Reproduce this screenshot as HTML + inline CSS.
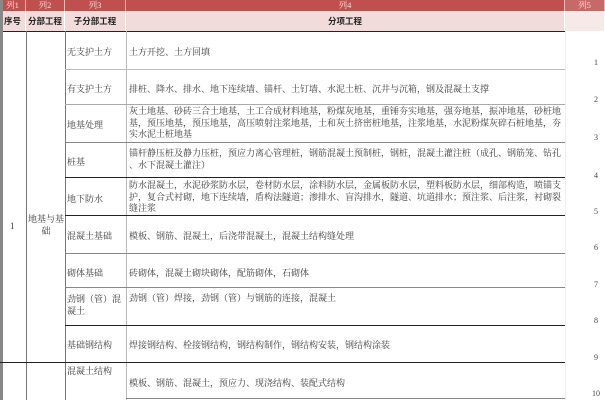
<!DOCTYPE html>
<html><head><meta charset="utf-8"><style>
*{margin:0;padding:0;box-sizing:border-box}
body{width:605px;height:400px;background:#fff;position:relative;overflow:hidden;font-family:"Liberation Serif","Noto Serif CJK SC",serif;font-size:9px;color:#3a3a3a}
.a{position:absolute}
.h1{background:#c0504d;color:#f4e0df;top:0;height:11px;font-size:8.5px;line-height:11px;text-align:center;border-right:1px solid #e8b8b6}
.h2{background:#f2dcdb;top:11px;height:20px;font-size:8.5px;line-height:20px;text-align:center;font-weight:bold;color:#222;font-family:"Liberation Sans","Noto Sans CJK SC",sans-serif;border-right:1px solid #fff}
.hl{height:1px;background:#888}
.hd{height:1px;background:#222}
.vl{width:1px;background:#777}
.t{line-height:11.5px;line-break:anywhere;word-break:break-all}
.n{left:594px;font-size:8px;color:#444}
</style></head><body>
<div class="a h1" style="left:0;width:26px">列1</div>
<div class="a h1" style="left:26px;width:39px">列2</div>
<div class="a h1" style="left:65px;width:61px">列3</div>
<div class="a h1" style="left:126px;width:439px">列4</div>
<div class="a h1" style="left:565px;width:40px;background:#c76a67">列5</div>
<div class="a h2" style="left:0;width:26px">序号</div>
<div class="a h2" style="left:26px;width:39px">分部工程</div>
<div class="a h2" style="left:65px;width:61px">子分部工程</div>
<div class="a h2" style="left:126px;width:439px">分项工程</div>
<div class="a h2" style="left:565px;width:40px;background:#f7e9e8"></div>
<div class="a hd" style="left:0;top:31px;width:565px"></div>
<div class="a" style="left:0;top:0;width:3px;height:400px;background:#888"></div>
<div class="a vl" style="left:26px;top:31px;height:369px"></div>
<div class="a vl" style="left:65px;top:31px;height:369px"></div>
<div class="a vl" style="left:126px;top:31px;height:369px;background:#bbb"></div>
<div class="a vl" style="left:565px;top:31px;height:369px;background:#eee"></div>
<div class="a hl" style="left:65px;top:69px;width:500px;background:#bbb"></div>
<div class="a hl" style="left:65px;top:104px;width:500px;background:#aaa"></div>
<div class="a hl" style="left:65px;top:142px;width:500px"></div>
<div class="a hd" style="left:65px;top:177px;width:500px"></div>
<div class="a hd" style="left:65px;top:215px;width:500px"></div>
<div class="a hl" style="left:65px;top:253px;width:500px"></div>
<div class="a hl" style="left:65px;top:287px;width:500px"></div>
<div class="a hd" style="left:65px;top:325px;width:500px"></div>
<div class="a hd" style="left:0;top:362px;width:565px"></div>
<div class="a hl" style="left:126px;top:398px;width:439px"></div>

<div class="a" style="left:10px;top:221px">1</div>
<div class="a t" style="left:28px;top:214px;width:36px;text-align:center">地基与基础</div>

<div class="a" style="left:67px;top:45px">无支护土方</div>
<div class="a" style="left:67px;top:82px">有支护土方</div>
<div class="a" style="left:67px;top:118px">地基处理</div>
<div class="a" style="left:67px;top:155px">桩基</div>
<div class="a" style="left:67px;top:192px">地下防水</div>
<div class="a" style="left:67px;top:229px">混凝土基础</div>
<div class="a" style="left:67px;top:266px">砌体基础</div>
<div class="a t" style="left:67px;top:294px;width:58px">劲钢（管）混凝土</div>
<div class="a" style="left:67px;top:338px">基础钢结构</div>
<div class="a" style="left:67px;top:364px">混凝土结构</div>

<div class="a" style="left:129px;top:45px">土方开挖、土方回填</div>
<div class="a" style="left:129px;top:82px">排桩、降水、排水、地下连续墙、锚杆、土钉墙、水泥土桩、沉井与沉箱，钢及混凝土支撑</div>
<div class="a t" style="left:129px;top:106px;width:434px">灰土地基、砂砖三合土地基，土工合成材料地基，粉煤灰地基，重锤夯实地基，强夯地基，振冲地基，砂桩地基，预压地基，预压地基，高压喷射注浆地基，土和灰土挤密桩地基，注浆地基，水泥粉煤灰碎石桩地基，夯实水泥土桩地基</div>
<div class="a t" style="left:129px;top:148px;width:434px">锚杆静压桩及静力压桩，预应力离心管理桩，钢筋混凝土预制桩，钢桩，混凝土灌注桩（成孔、钢筋笼、钻孔、水下混凝土灌注）</div>
<div class="a t" style="left:129px;top:180px;width:434px">防水混凝土，水泥砂浆防水层，卷材防水层，涂料防水层，金属板防水层，塑料板防水层，细部构造，喷锚支护，复合式衬砌，地下连续墙，盾构法隧道；渗排水、盲沟排水，隧道、坑道排水；预注浆、后注浆，衬砌裂缝注浆</div>
<div class="a" style="left:129px;top:229px">模板、钢筋、混凝土，后浇带混凝土，混凝土结构缝处理</div>
<div class="a" style="left:129px;top:266px">砖砌体，混凝土砌块砌体，配筋砌体，石砌体</div>
<div class="a" style="left:129px;top:291px">劲钢（管）焊接，劲钢（管）与钢筋的连接，混凝土</div>
<div class="a" style="left:129px;top:338px">焊接钢结构、栓接钢结构，钢结构制作，钢结构安装，钢结构涂装</div>
<div class="a" style="left:129px;top:376px">模板、钢筋、混凝土，预应力、现浇结构、装配式结构</div>

<div class="a n" style="top:58px">1</div>
<div class="a n" style="top:95px">2</div>
<div class="a n" style="top:133px">3</div>
<div class="a n" style="top:171px">4</div>
<div class="a n" style="top:207px">5</div>
<div class="a n" style="top:243px">6</div>
<div class="a n" style="top:280px">7</div>
<div class="a n" style="top:316px">8</div>
<div class="a n" style="top:353px">9</div>
<div class="a n" style="top:389px;left:592px">10</div>
</body></html>
